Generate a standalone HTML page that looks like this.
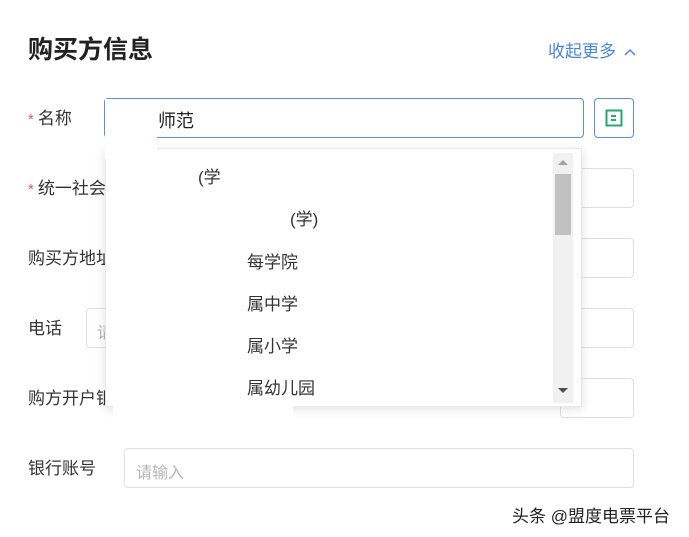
<!DOCTYPE html>
<html><head><meta charset="utf-8"><style>
body{margin:0;width:689px;height:537px;background:#fff;position:relative;overflow:hidden;font-family:"Liberation Sans","Noto Sans CJK SC",sans-serif;color:#333}
.a{position:absolute}
.lbl{font-size:17px;color:#333;line-height:20px}
.st{color:#e4575d;font-size:15px;margin-right:4px}
.inp{position:absolute;border:1px solid #dcdfe6;border-radius:4px;box-sizing:border-box;height:40px}
.ph{color:#b5b5b5;font-size:16px}
.it{position:absolute;font-size:17px;color:#333}
</style></head><body>
<div class="a" style="left:28px;top:30px;font-size:25px;font-weight:bold;color:#222">购买方信息</div>
<div class="a" style="left:548px;top:37px;font-size:17px;color:#4a86e0">收起更多 <svg width="12" height="10" viewBox="0 0 12 10" style="margin-left:3px"><path d="M1 8 L6 3 L11 8" stroke="#4a86e0" stroke-width="1.5" fill="none"/></svg></div>

<div class="a lbl" style="left:28px;top:109px"><span class="st">*</span>名称</div>
<div class="inp" style="left:104px;top:98px;width:480px;border-color:#5b8fe6;border-width:1.5px"></div>
<div class="a" style="left:158px;top:107px;font-size:18px;color:#222">师范</div>
<div class="inp" style="left:594px;top:98px;width:40px;border-color:#5b8fe6"></div>
<svg class="a" style="left:605px;top:109px" width="18" height="18" viewBox="0 0 18 18"><rect x="1.5" y="1.5" width="15" height="15" fill="none" stroke="#2aa574" stroke-width="2"/><path d="M6 7h5M6 11h5" stroke="#2aa574" stroke-width="2"/></svg>

<div class="a lbl" style="left:28px;top:179px"><span class="st">*</span>统一社会</div>
<div class="inp" style="left:560px;top:168px;width:74px"></div>
<div class="a lbl" style="left:28px;top:249px">购买方地址</div>
<div class="inp" style="left:560px;top:238px;width:74px"></div>
<div class="a lbl" style="left:28px;top:319px">电话</div>
<div class="inp" style="left:86px;top:308px;width:548px"></div>
<div class="a ph" style="left:97px;top:319px">请</div>
<div class="a lbl" style="left:28px;top:389px">购方开户银</div>
<div class="inp" style="left:560px;top:378px;width:74px"></div>
<div class="a lbl" style="left:28px;top:459px">银行账号</div>
<div class="inp" style="left:124px;top:448px;width:510px"></div>
<div class="a ph" style="left:136px;top:459px">请输入</div>

<div class="a" style="left:105px;top:148px;width:477px;height:259px;background:#fff;border:1px solid #e8e8e8;box-shadow:0 2px 10px rgba(0,0,0,.12);box-sizing:border-box"></div>
<div class="a" style="left:553px;top:153px;width:20px;height:250px;background:#f1f1f1"></div>
<div class="a" style="left:555px;top:174px;width:16px;height:61px;background:#c1c1c1"></div>
<svg class="a" style="left:558px;top:159px" width="10" height="6"><path d="M0 6L5 1L10 6Z" fill="#a3a3a3"/></svg>
<svg class="a" style="left:558px;top:388px" width="10" height="6"><path d="M0 0L5 5L10 0Z" fill="#505050"/></svg>
<div class="it" style="left:198px;top:163px">(学</div>
<div class="it" style="left:290px;top:205px">(学)</div>
<div class="it" style="left:247px;top:248px">每学院</div>
<div class="it" style="left:247px;top:290px">属中学</div>
<div class="it" style="left:247px;top:332px">属小学</div>
<div class="it" style="left:247px;top:374px">属幼儿园</div>
<div class="a" style="left:105px;top:99px;width:52px;height:60px;background:#fff"></div>
<div class="a" style="left:113px;top:396px;width:180px;height:32px;background:#fff"></div>
<div class="a" style="left:512px;top:502px;font-size:17px;color:#222">头条 @盟度电票平台</div>
</body></html>
